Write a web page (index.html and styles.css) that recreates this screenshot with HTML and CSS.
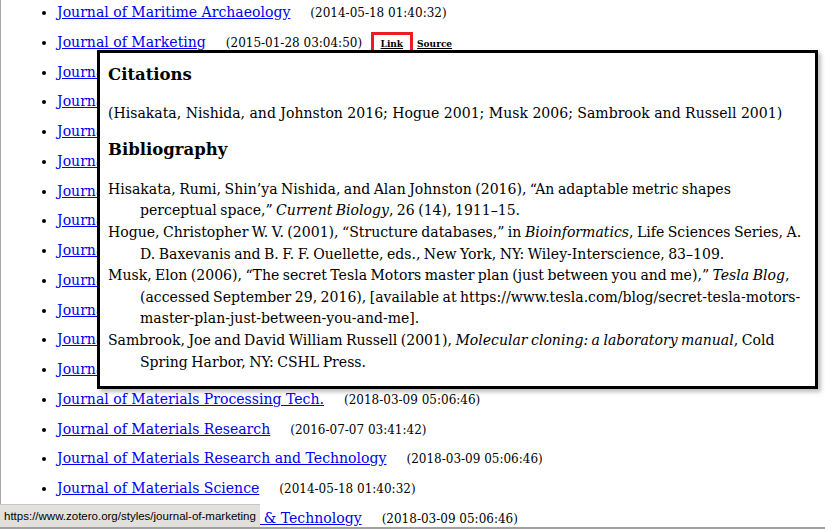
FILE: index.html
```html
<!DOCTYPE html>
<html lang="en">
<head>
    <meta charset="UTF-8">
    <title>Zotero Styles</title>
    <link rel="stylesheet" href="styles.css">
</head>
<body>

    <ul class="style-list">
        <li><a href="#">Journal of Maritime Archaeology</a><span class="date">(2014-05-18 01:40:32)</span></li>
        <li class="open">
            <a href="#">Journal of Marketing</a><span class="date">(2015-01-28 03:04:50)</span>
            <span class="tools"><a class="tool current" href="#">Link</a><a class="tool" href="#">Source</a></span>

            <!-- Preview popup -->
            <div class="preview">
                <h3>Citations</h3>
                <p class="citations">(Hisakata, Nishida, and Johnston 2016; Hogue 2001; Musk 2006; Sambrook and Russell 2001)</p>
                <h3>Bibliography</h3>
                <div class="bib">
                    <div class="entry">Hisakata, Rumi, Shin’ya Nishida, and Alan Johnston (2016), “An adaptable metric shapes perceptual space,” <i>Current Biology</i>, 26 (14), 1911–15.</div>
                    <div class="entry">Hogue, Christopher W. V. (2001), “Structure databases,” in <i>Bioinformatics</i>, Life Sciences Series, A. D. Baxevanis and B. F. F. Ouellette, eds., New York, NY: Wiley-Interscience, 83–109.</div>
                    <div class="entry">Musk, Elon (2006), “The secret Tesla Motors master plan (just between you and me),” <i>Tesla Blog</i>, (accessed September 29, 2016), [available at https://www.tesla.com/blog/secret-tesla-motors-master-plan-just-between-you-and-me].</div>
                    <div class="entry">Sambrook, Joe and David William Russell (2001), <i>Molecular cloning: a laboratory manual</i>, Cold Spring Harbor, NY: CSHL Press.</div>
                </div>
            </div>
        </li>
        <li><a href="#">Journal of Marketing Research</a><span class="date">(2015-01-28 03:04:50)</span></li>
        <li><a href="#">Journal of Mass Spectrometry</a><span class="date">(2014-05-18 01:40:32)</span></li>
        <li><a href="#">Journal of Material Culture</a><span class="date">(2016-07-07 03:41:42)</span></li>
        <li><a href="#">Journal of Materials Chemistry</a><span class="date">(2014-05-18 01:40:32)</span></li>
        <li><a href="#">Journal of Materials Chemistry A</a><span class="date">(2014-05-18 01:40:32)</span></li>
        <li><a href="#">Journal of Materials Chemistry B</a><span class="date">(2014-05-18 01:40:32)</span></li>
        <li><a href="#">Journal of Materials Chemistry C</a><span class="date">(2014-05-18 01:40:32)</span></li>
        <li><a href="#">Journal of Materials Engineering and Performance</a><span class="date">(2018-03-09 05:06:46)</span></li>
        <li><a href="#">Journal of Materials in Civil Engineering</a><span class="date">(2016-07-07 03:41:42)</span></li>
        <li><a href="#">Journal of Materials NanoScience</a><span class="date">(2018-03-09 05:06:46)</span></li>
        <li><a href="#">Journal of Materials Processing</a><span class="date">(2018-03-09 05:06:46)</span></li>
        <li><a href="#">Journal of Materials Processing Tech.</a><span class="date">(2018-03-09 05:06:46)</span></li>
        <li><a href="#">Journal of Materials Research</a><span class="date">(2016-07-07 03:41:42)</span></li>
        <li><a href="#">Journal of Materials Research and Technology</a><span class="date">(2018-03-09 05:06:46)</span></li>
        <li><a href="#">Journal of Materials Science</a><span class="date">(2014-05-18 01:40:32)</span></li>
        <li><a href="#">Journal of Materials Science &amp; Technology</a><span class="date">(2018-03-09 05:06:46)</span></li>
    </ul>

    <div class="status">https://www.zotero.org/styles/journal-of-marketing</div>

</body>
</html>
```

FILE: styles.css
```css
html, body {
    height: 100%;
    overflow: hidden;
}

body {
    font-family: "DejaVu Serif", Georgia, serif;
    margin: 0;
    padding: 0 0 0 17px;
    border-left: 1px solid #a8a8a8;
    background-color: white;
    color: black;
}

.style-list {
    margin: -2px 0 0 0;
    padding-left: 39px;
}

.style-list li {
    font-size: 14.05px;
    height: 29.76px;
    line-height: 29.76px;
    white-space: nowrap;
}

.style-list a {
    color: #0000ee;
}

.date {
    font-size: 12px;
    line-height: 1;
    margin-left: 20px;
}

.open {
    position: relative;
}

.tools {
    line-height: 1;
    margin-left: 4px;
}

.tool {
    font-size: 9px;
    font-weight: bold;
    color: black !important;
    margin-right: 4px;
}

.tool.current {
    display: inline-block;
    line-height: 18px;
    padding: 0 7px;
    border: 3px solid #ed1c24;
}

.preview {
    position: absolute;
    left: 40px;
    top: 22px;
    width: 699px;
    height: 333px;
    padding: 0 8px;
    border: 3px solid black;
    background-color: white;
    box-shadow: 3px 3px 4px rgba(0, 0, 0, 0.25);
    white-space: normal;
    z-index: 2;
}

.preview h3 {
    font-size: 16.5px;
    margin: 11px 0 0 0;
    line-height: 22px;
}

.citations {
    font-size: 14.05px;
    margin: 16px 0 15px 0;
    line-height: 22px;
}

.bib {
    margin-top: 18px;
}

.bib .entry {
    font-size: 14.05px;
    line-height: 21.6px;
    word-spacing: -1px;
    padding-left: 32px;
    text-indent: -32px;
}

.status {
    position: fixed;
    left: 0;
    bottom: 2px;
    width: 256px;
    height: 22px;
    padding-left: 4px;
    background-color: #e2e0dc;
    border-top: 1px solid #c8c6c2;
    font-family: "Liberation Sans", Tahoma, sans-serif;
    font-size: 11.5px;
    line-height: 22px;
    white-space: nowrap;
    overflow: hidden;
    color: black;
    z-index: 3;
}

body::after {
    content: "";
    position: fixed;
    left: 0;
    right: 0;
    bottom: 0;
    height: 2px;
    background-color: #a0a0a0;
    z-index: 4;
}
```
